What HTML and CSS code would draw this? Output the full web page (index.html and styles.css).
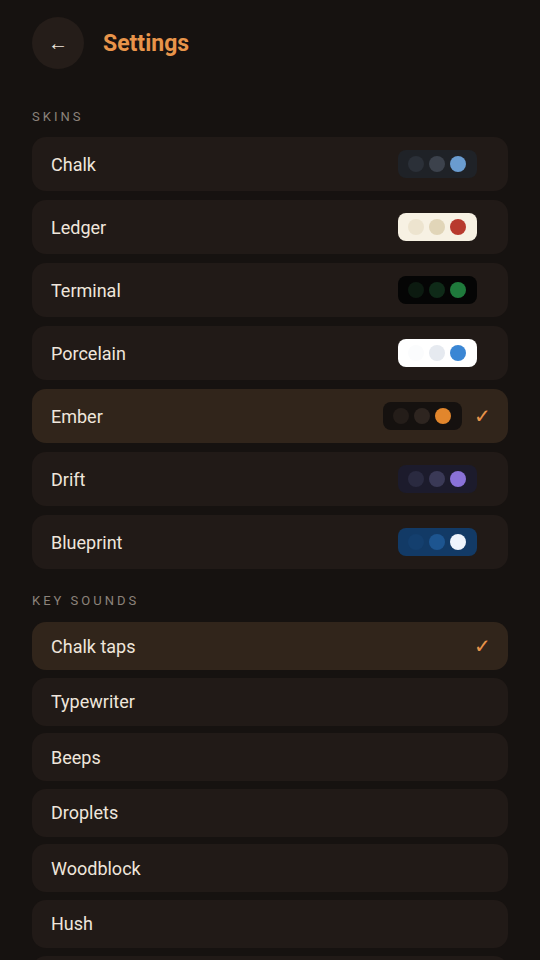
FILE: index.html
```html
<!DOCTYPE html>
<html>
<head>
  <title>Settings</title>
  <link rel="stylesheet" href="styles.css">
</head>
<body>
  <div class="settings-page">
    <div class="header">
      <button class="back-button">&larr;</button>
      <h1 class="page-title">Settings</h1>
    </div>

    <h2 class="section-heading">Skins</h2>
    <ul class="option-list skins-list">
      <li class="option-item skin-item">
        <span class="option-label">Chalk</span>
        <span class="swatch swatch-chalk"><i class="dot"></i><i class="dot"></i><i class="dot"></i></span>
      </li>
      <li class="option-item skin-item">
        <span class="option-label">Ledger</span>
        <span class="swatch swatch-ledger"><i class="dot"></i><i class="dot"></i><i class="dot"></i></span>
      </li>
      <li class="option-item skin-item">
        <span class="option-label">Terminal</span>
        <span class="swatch swatch-terminal"><i class="dot"></i><i class="dot"></i><i class="dot"></i></span>
      </li>
      <li class="option-item skin-item">
        <span class="option-label">Porcelain</span>
        <span class="swatch swatch-porcelain"><i class="dot"></i><i class="dot"></i><i class="dot"></i></span>
      </li>
      <li class="option-item skin-item selected">
        <span class="option-label">Ember</span>
        <span class="swatch swatch-ember"><i class="dot"></i><i class="dot"></i><i class="dot"></i></span>
        <span class="check-mark">&#10003;</span>
      </li>
      <li class="option-item skin-item">
        <span class="option-label">Drift</span>
        <span class="swatch swatch-drift"><i class="dot"></i><i class="dot"></i><i class="dot"></i></span>
      </li>
      <li class="option-item skin-item">
        <span class="option-label">Blueprint</span>
        <span class="swatch swatch-blueprint"><i class="dot"></i><i class="dot"></i><i class="dot"></i></span>
      </li>
    </ul>

    <h2 class="section-heading sounds-heading">Key sounds</h2>
    <ul class="option-list sounds-list">
      <li class="option-item sound-item selected">
        <span class="option-label">Chalk taps</span>
        <span class="check-mark">&#10003;</span>
      </li>
      <li class="option-item sound-item"><span class="option-label">Typewriter</span></li>
      <li class="option-item sound-item"><span class="option-label">Beeps</span></li>
      <li class="option-item sound-item"><span class="option-label">Droplets</span></li>
      <li class="option-item sound-item"><span class="option-label">Woodblock</span></li>
      <li class="option-item sound-item"><span class="option-label">Hush</span></li>
      <li class="option-item sound-item"></li>
    </ul>
  </div>
</body>
</html>
```

FILE: styles.css
```css
body {
  font-family: Roboto, 'Noto Sans', sans-serif;
  background-color: #161210;
  color: #efe6dc;
  margin: 0;
  padding: 0;
  overflow: hidden;
}

.settings-page {
  padding: 17px 32px 0 32px;
}

.header {
  display: flex;
  align-items: center;
  gap: 19px;
}

.back-button {
  width: 52px;
  height: 52px;
  border-radius: 50%;
  border: none;
  background-color: #251d19;
  color: #efe6dc;
  font-size: 20px;
  padding: 0;
  line-height: 52px;
  cursor: pointer;
}

.page-title {
  margin: 0;
  font-size: 23px;
  font-weight: bold;
  color: #e8944a;
}

.section-heading {
  margin: 40px 0 12px 0;
  font-size: 13px;
  font-weight: normal;
  letter-spacing: 3px;
  text-transform: uppercase;
  color: #8c837b;
  line-height: 16px;
}

.sounds-heading {
  margin-top: 24px;
  margin-bottom: 13px;
}

.option-list {
  list-style: none;
  margin: 0;
  padding: 0;
  display: flex;
  flex-direction: column;
}

.skins-list {
  gap: 9px;
}

.sounds-list {
  gap: 7.6px;
}

.option-item {
  display: flex;
  align-items: center;
  background-color: #211a17;
  border-radius: 14px;
  padding: 0 17px 0 19px;
  font-size: 18px;
}

.skin-item {
  height: 54px;
}

.sound-item {
  height: 48px;
}

.option-item.selected {
  background-color: #31251b;
}

.option-label {
  flex-grow: 1;
}

.check-mark {
  color: #e8944a;
  font-size: 20px;
  margin-left: 12px;
}

.swatch {
  display: flex;
  gap: 5px;
  padding: 6px 11px 6px 10px;
  border-radius: 8px;
  margin-right: 14px;
}

.dot {
  display: block;
  width: 16px;
  height: 16px;
  border-radius: 50%;
}

.selected .swatch {
  margin-right: 0;
}

.swatch-chalk { background-color: #1f2227; }
.swatch-chalk .dot:nth-child(1) { background-color: #2b3038; }
.swatch-chalk .dot:nth-child(2) { background-color: #3c424c; }
.swatch-chalk .dot:nth-child(3) { background-color: #6a9cd0; }

.swatch-ledger { background-color: #f7f1e3; }
.swatch-ledger .dot:nth-child(1) { background-color: #ede4cf; }
.swatch-ledger .dot:nth-child(2) { background-color: #e1d5b8; }
.swatch-ledger .dot:nth-child(3) { background-color: #b83a2e; }

.swatch-terminal { background-color: #050505; }
.swatch-terminal .dot:nth-child(1) { background-color: #0c1a10; }
.swatch-terminal .dot:nth-child(2) { background-color: #0f2a18; }
.swatch-terminal .dot:nth-child(3) { background-color: #1f7a3c; }

.swatch-porcelain { background-color: #ffffff; }
.swatch-porcelain .dot:nth-child(1) { background-color: #fbfcfd; }
.swatch-porcelain .dot:nth-child(2) { background-color: #e6eaf0; }
.swatch-porcelain .dot:nth-child(3) { background-color: #3a86d4; }

.swatch-ember { background-color: #15110f; }
.swatch-ember .dot:nth-child(1) { background-color: #241d19; }
.swatch-ember .dot:nth-child(2) { background-color: #2e2520; }
.swatch-ember .dot:nth-child(3) { background-color: #e2862c; }

.swatch-drift { background-color: #1c1b2c; }
.swatch-drift .dot:nth-child(1) { background-color: #2a2a40; }
.swatch-drift .dot:nth-child(2) { background-color: #3a3956; }
.swatch-drift .dot:nth-child(3) { background-color: #8a72d8; }

.swatch-blueprint { background-color: #123a66; }
.swatch-blueprint .dot:nth-child(1) { background-color: #143f6e; }
.swatch-blueprint .dot:nth-child(2) { background-color: #1d5590; }
.swatch-blueprint .dot:nth-child(3) { background-color: #eef4fc; }
```
